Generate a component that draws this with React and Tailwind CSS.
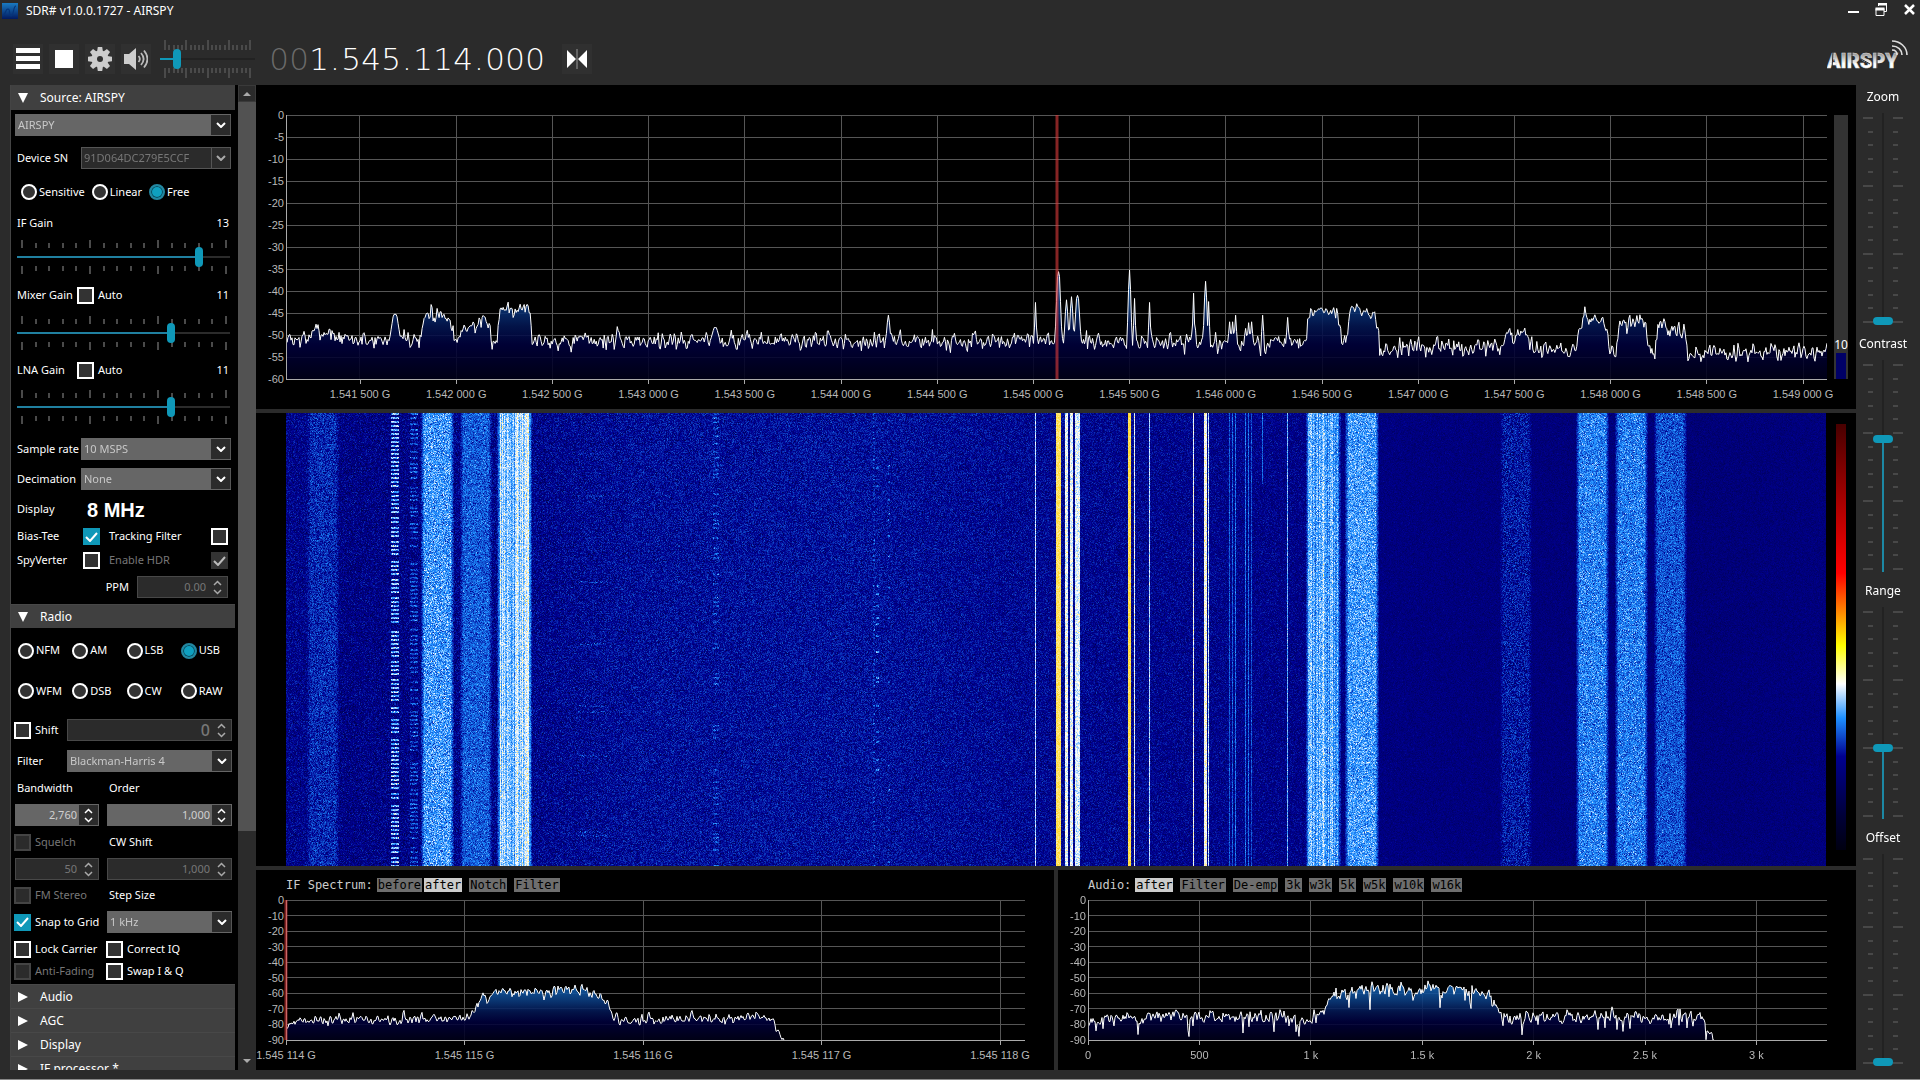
import { useEffect, useRef, useState } from 'react';
import { clsx } from 'clsx';

const START = 286;
const WIDTH = 1540;

// wide signals: from, to, level in dB, waterfall level, waterfall spread
const BANDS = [
  { from: 308, to: 338, db: -49.3, level: 0.33, spread: 0.08 },
  { from: 422, to: 453, db: -45.2, level: 0.57, spread: 0.1 },
  { from: 461, to: 491, db: -47.8, level: 0.44, spread: 0.08 },
  { from: 498, to: 531, db: -43.6, level: 0.68, spread: 0.07, streaks: 0.09 },
  { from: 1307, to: 1340, db: -44.8, level: 0.6, spread: 0.08, streaks: 0.07 },
  { from: 1346, to: 1378, db: -44.8, level: 0.58, spread: 0.09 },
  { from: 1501, to: 1531, db: -50.4, level: 0.29, spread: 0.08 },
  { from: 1577, to: 1608, db: -46.6, level: 0.52, spread: 0.09 },
  { from: 1616, to: 1647, db: -47, level: 0.51, spread: 0.09 },
  { from: 1655, to: 1686, db: -48.6, level: 0.42, spread: 0.08 },
];

// narrow carriers: position, peak in dB, waterfall level, half width
const CARRIERS = [
  { x: 395, db: -45.3, level: 0, w: 4 },
  { x: 715, db: -48.3, level: 0, w: 3 },
  { x: 888, db: -45.5, level: 0, w: 1 },
  { x: 1035, db: -42.6, level: 0.72, w: 0 },
  { x: 1058, db: -35.6, level: 0.95, w: 2 },
  { x: 1066, db: -42, level: 0.78, w: 1 },
  { x: 1071, db: -41.3, level: 0.78, w: 1 },
  { x: 1077, db: -41, level: 0.76, w: 2 },
  { x: 1129, db: -35.2, level: 0.97, w: 1 },
  { x: 1134, db: -41.7, level: 0.78, w: 0 },
  { x: 1149, db: -42.6, level: 0.72, w: 0 },
  { x: 1193, db: -40.5, level: 0.8, w: 0 },
  { x: 1205, db: -37.8, level: 0.82, w: 1 },
  { x: 1208, db: -42.4, level: 0.72, w: 0 },
  { x: 1229, db: -47, level: 0.44, w: 0 },
  { x: 1232, db: -47, level: 0.44, w: 0 },
  { x: 1235, db: -45.5, level: 0.48, w: 0 },
  { x: 1245, db: -48.5, level: 0.48, w: 0 },
  { x: 1248, db: -47.2, level: 0.46, w: 0 },
  { x: 1251, db: -47, level: 0.42, w: 0 },
  { x: 1262, db: -45.5, level: 0.48, w: 0, until: 70 },
  { x: 1287, db: -46, level: 0.62, w: 0 },
];

const RAMP = [
  [0, 0, 0, 40],
  [0.25, 0, 0, 145],
  [0.55, 30, 144, 255],
  [0.8, 255, 255, 255],
  [1, 255, 215, 40],
];

function createRandom(seed) {
  let s = seed;
  return () => {
    s = (s * 1664525 + 1013904223) >>> 0;
    return s / 4294967296;
  };
}

function bell(random) {
  return (random() + random() + random() + random() - 2) * 1.7;
}

function clamp(v, min, max) {
  return Math.min(max, Math.max(min, v));
}

function follow(points, x) {
  for (let i = 1; i < points.length; i++) {
    const [x1, y1] = points[i];
    const [x0, y0] = points[i - 1];
    if (x <= x1) return y0 + ((y1 - y0) * (x - x0)) / (x1 - x0);
  }
  return points[points.length - 1][1];
}

function makeBandTrace() {
  const random = createRandom(7);
  const floor = [[286, -51], [900, -51.3], [1300, -51.9], [1390, -53.3], [1460, -52.8], [1550, -53.2], [1700, -54.4], [1826, -53.7]];
  const out = [];
  let last = 0;
  for (let i = 0; i <= WIDTH; i++) {
    const x = START + i;
    let db = follow(floor, x);
    BANDS.forEach(b => {
      const soft = b.level < 0.35 ? 10 : 5;
      const inside = clamp(Math.min(x - b.from + 1, b.to + 1 - x) / soft, 0, 1);
      db = db + (b.db - db) * Math.sqrt(inside);
    });
    const n = bell(random);
    db += (n + last * 0.4) * 0.95;
    last = n;
    CARRIERS.forEach(c => {
      const away = Math.max(0, Math.abs(x - c.x) - c.w * 0.4);
      const reach = c.w * 0.6 + 1.5;
      if (away < reach) db = Math.max(db, c.db - ((c.db + 51) * away) / reach);
    });
    out.push([i / WIDTH, db]);
  }
  return out;
}

function makeTrace(seed, shape, spread, dips, end) {
  const random = createRandom(seed);
  const out = [];
  let last = 0;
  for (let x = 0; x <= end; x++) {
    const n = bell(random);
    let db = follow(shape, x) + (n + last * 0.5) * spread;
    if (random() < dips) db -= 4 + random() * 6;
    last = n;
    out.push([x / 739, Math.max(-90, db)]);
  }
  return out;
}

const BAND_TRACE = makeBandTrace();
const IF_TRACE = makeTrace(
  21,
  [[0, -81], [12, -77], [100, -77], [184, -75.5], [196, -62], [215, -59.5], [260, -59], [290, -58], [308, -60], [318, -64], [328, -75], [334, -77], [400, -76.5], [480, -75], [489, -80], [496, -90]],
  1.5, 0, 498
);
const AUDIO_TRACE = makeTrace(
  33,
  [[0, -81], [8, -76], [120, -75], [224, -76], [232, -72], [246, -60], [280, -58.5], [330, -57], [388, -58], [400, -62], [414, -76], [500, -75.5], [610, -75], [617, -80], [626, -90]],
  2, 0.045, 626
);

const MAIN_X = Array.from({ length: 16 }, (_, i) => {
  const s = String(1541500 + i * 500);
  return [(74 + i * 96.2) / 1541, `${s[0]}.${s.slice(1, 4)} ${s.slice(4)} G`];
});
const MAIN_Y = Array.from({ length: 13 }, (_, i) => -i * 5);
const SMALL_Y = Array.from({ length: 10 }, (_, i) => -i * 10);
const IF_X = [0, 1, 2, 3, 4].map(i => [(i * 178.5) / 739, `1.545 ${114 + i} G`]);
const AUDIO_X = ['0', '500', '1 k', '1.5 k', '2 k', '2.5 k', '3 k'].map((t, i) => [(i * 111.4) / 739, t]);

function Spectrum({ id, trace, xTicks, yTicks, marker, markerWidth }) {
  const lowest = yTicks[yTicks.length - 1];
  const line = trace.map(([x, db]) => `${(x * 1000).toFixed(2)},${((db / lowest) * 1000).toFixed(1)}`).join(' ');
  const endX = trace[trace.length - 1][0] * 1000;

  return (
    <svg className="block w-full h-full overflow-visible font-['Liberation_Sans',sans-serif] text-[11px]" role="img" aria-label={id}>
      <defs>
        <linearGradient id={`${id}-fill`} gradientUnits="userSpaceOnUse" x1="0" y1="0" x2="0" y2="1000">
          <stop offset="0.6" stopColor="#156bbd" />
          <stop offset="0.72" stopColor="#0b3c80" />
          <stop offset="0.8" stopColor="#031652" />
          <stop offset="0.87" stopColor="#00003c" />
          <stop offset="1" stopColor="#000018" />
        </linearGradient>
      </defs>
      <g stroke="#565656" shapeRendering="crispEdges">
        {yTicks.map(db => {
          const y = `${(db / lowest) * 100}%`;
          return <line key={db} x1="0" x2="100%" y1={y} y2={y} />;
        })}
        {xTicks.map(([x]) => (
          <line key={x} x1={`${x * 100}%`} x2={`${x * 100}%`} y1="0" y2="100%" />
        ))}
      </g>
      <svg width="100%" height="100%" viewBox="0 0 1000 1000" preserveAspectRatio="none">
        <polygon points={`0,1000 ${line} ${endX},1000`} fill={`url(#${id}-fill)`} fillOpacity="0.88" />
        <polyline points={line} fill="none" stroke="#fff" strokeWidth="1" vectorEffect="non-scaling-stroke" />
      </svg>
      <g stroke="#aaa" shapeRendering="crispEdges">
        <line x1="0" x2="0" y1="0" y2="100%" />
        <line x1="0" x2="100%" y1="100%" y2="100%" />
      </g>
      <g fill="#b8b8b8">
        {yTicks.map(db => (
          <text key={db} x="-2" y={`${(db / lowest) * 100}%`} dy="4" textAnchor="end">{db === 0 ? 0 : db}</text>
        ))}
        {xTicks.map(([x, label]) => (
          <svg key={label} x={`${x * 100}%`} y="100%" className="overflow-visible">
            <line x1="0" x2="0" y1="0" y2="5" stroke="#aaa" shapeRendering="crispEdges" />
            <text x="0" y="19" textAnchor="middle">{label}</text>
          </svg>
        ))}
      </g>
      {marker !== undefined && (
        <line x1={`${marker * 100}%`} x2={`${marker * 100}%`} y1="0" y2="100%" stroke="#e03c3c" strokeOpacity="0.6" strokeWidth={markerWidth} />
      )}
    </svg>
  );
}

function Waterfall() {
  const ref = useRef(null);

  useEffect(() => {
    const canvas = ref.current;
    const ctx = canvas.getContext('2d');
    const { width, height } = canvas;
    const image = ctx.createImageData(width, height);
    const random = createRandom(99);
    const floor = [[286, 0.24], [345, 0.22], [540, 0.24], [640, 0.27], [860, 0.275], [1000, 0.255], [1300, 0.23], [1390, 0.205], [1560, 0.195], [1700, 0.185], [1826, 0.2]];
    const floorSpread = [[286, 0.055], [600, 0.065], [860, 0.065], [1300, 0.045], [1390, 0.025], [1826, 0.022]];

    const columns = Array.from({ length: width }, (_, i) => {
      const x = START + i;
      let level = follow(floor, x);
      let spread = follow(floorSpread, x);
      BANDS.forEach(b => {
        const inside = clamp(Math.min(x - b.from + 2, b.to + 1 - x) / 4, 0, 1);
        const streak = b.streaks ? bell(random) * b.streaks : 0;
        level += (b.level + streak - level) * inside;
        spread += (b.spread - spread) * inside;
      });
      const carrier = CARRIERS.find(c => c.level > 0 && Math.abs(x - c.x) <= c.w);
      return { x, level, spread, carrier };
    });

    // bursts that blink on and off down the waterfall
    const bursts = [
      { from: 391, to: 398, level: 0.64, on: 0.8 },
      { from: 410, to: 417, level: 0.4, on: 0.6 },
      { from: 578, to: 606, level: 0.31, on: 0.08 },
      { from: 713, to: 718, level: 0.4, on: 0.25 },
      { from: 873, to: 874, level: 0.38, on: 0.6 },
      { from: 876, to: 878, level: 0.5, on: 0.1 },
      { from: 888, to: 889, level: 0.45, on: 0.1 },
    ];

    for (let y = 0; y < height; y++) {
      if (y % 2 === 0) bursts.forEach(b => { b.lit = !b.lit && random() < b.on; });
      columns.forEach(({ x, level, spread, carrier }, i) => {
        let v = level;
        let s = spread;
        if (carrier && !(carrier.until && y > carrier.until)) {
          v = carrier.level;
          s = carrier.level > 0.9 ? 0.03 : 0.06;
        }
        const burst = bursts.find(b => b.lit && x >= b.from && x <= b.to);
        if (burst) {
          v = burst.level;
          s = 0.1;
        }
        v = clamp(v + bell(random) * s, 0, 1);
        let k = 1;
        while (k < RAMP.length - 1 && v > RAMP[k][0]) k++;
        const a = RAMP[k - 1];
        const b = RAMP[k];
        const t = (v - a[0]) / (b[0] - a[0]);
        const p = (y * width + i) * 4;
        image.data[p] = a[1] + (b[1] - a[1]) * t;
        image.data[p + 1] = a[2] + (b[2] - a[2]) * t;
        image.data[p + 2] = a[3] + (b[3] - a[3]) * t;
        image.data[p + 3] = 255;
      });
    }
    ctx.putImageData(image, 0, 0);
  }, []);

  return <canvas ref={ref} width={WIDTH} height={453} className="flex-1 min-w-0 h-full" />;
}

function Section({ title, open, first }) {
  return (
    <button
      className={clsx(
        'flex w-full shrink-0 items-center bg-[#404040] pl-[7px] text-left text-[12px] leading-4',
        first ? 'h-[25px]' : 'h-6 border-t border-[#484848]'
      )}
    >
      <svg className="w-[10px] h-[10px] mr-3 fill-white" viewBox="0 0 10 10">
        {open ? <path d="M0 0h10L5 10z" /> : <path d="M0 0l10 5L0 10z" />}
      </svg>
      {title}
    </button>
  );
}

function Select({ label, value, disabled, className }) {
  return (
    <div className={clsx('relative h-[22px] min-w-0', className)}>
      <select
        aria-label={label}
        disabled={disabled}
        className={clsx(
          'h-full w-full appearance-none border pl-[2px] pr-6 text-[11px] opacity-100',
          disabled ? 'border-[#555] bg-[#2b2b2b] text-[#777]' : 'border-[#666] bg-[#666] text-[#c8c8c8]'
        )}
      >
        <option>{value}</option>
      </select>
      <span
        className={clsx(
          'pointer-events-none absolute right-0 top-px flex h-5 w-5 items-center justify-center bg-[#2b2b2b]',
          disabled ? 'border-x border-[#555] text-[#aaa]' : 'border-r border-[#555] text-white'
        )}
      >
        <svg className="w-[10px] h-[6px] fill-none stroke-current stroke-2" viewBox="0 0 10 6">
          <path d="M1 1l4 4 4-4" />
        </svg>
      </span>
    </div>
  );
}

function Stepper({ label, value, disabled, big, className }) {
  return (
    <div
      className={clsx(
        'flex h-[22px] min-w-0 border',
        disabled ? 'border-[#484848] bg-[#2b2b2b] text-[#777]' : 'border-[#666] bg-[#666] text-[#d0d0d0]',
        className
      )}
    >
      <input
        aria-label={label}
        defaultValue={value}
        disabled={disabled}
        className={clsx('min-w-0 flex-1 bg-transparent pr-[2px] text-right', big ? 'text-[16px] font-medium' : 'text-[11px]')}
      />
      <div className={clsx('flex w-[19px] flex-col items-center justify-center gap-[3px] bg-[#2b2b2b]', disabled ? 'text-[#aaa]' : 'text-white')}>
        <button aria-label={`${label} up`} disabled={disabled}>
          <svg className="block w-[9px] h-[6px] fill-none stroke-current stroke-[1.5]" viewBox="0 0 9 6"><path d="M1 5l3.500-3.500L8 5" /></svg>
        </button>
        <button aria-label={`${label} down`} disabled={disabled}>
          <svg className="block w-[9px] h-[6px] fill-none stroke-current stroke-[1.5]" viewBox="0 0 9 6"><path d="M1 1l3.500 3.500L8 1" /></svg>
        </button>
      </div>
    </div>
  );
}

function Check({ label, checked, disabled, reverse, className }) {
  return (
    <label className={clsx('flex items-center gap-1 whitespace-nowrap', disabled && 'text-[#777]', reverse && 'flex-row-reverse justify-between', className)}>
      <span className="grid size-[17px] shrink-0 place-items-center">
        <input
          type="checkbox"
          defaultChecked={checked}
          disabled={disabled}
          className="peer [grid-area:1/1] size-[17px] appearance-none border-2 border-white bg-[#333] checked:border-[#0f98b8] checked:bg-[#0f98b8] disabled:border-[#444] disabled:bg-[#2b2b2b] disabled:checked:border-[#333] disabled:checked:bg-[#333]"
        />
        <svg className="pointer-events-none hidden [grid-area:1/1] w-[13px] h-[10px] fill-none stroke-white stroke-2 peer-checked:block peer-disabled:stroke-[#bbb]" viewBox="0 0 13 10">
          <path d="M1 5l4 4 7-8" />
        </svg>
      </span>
      {label}
    </label>
  );
}

function Radio({ label, name, checked }) {
  return (
    <label className="flex items-center gap-[2px] whitespace-nowrap">
      <input
        type="radio"
        name={name}
        defaultChecked={checked}
        className="size-4 shrink-0 appearance-none rounded-full border-2 border-white bg-[#333] checked:border-[#2487a0] checked:bg-[#0fa0c0] checked:shadow-[inset_0_0_0_1px_#0a4a5c]"
      />
      {label}
    </label>
  );
}

function Ticks({ count, tall, short, align }) {
  return (
    <div className={clsx('flex justify-between', align)}>
      {Array.from({ length: count }, (_, i) => (
        <span key={i} className={clsx('w-[2px] bg-[#4a4a4a]', i % 5 === 0 ? tall : short)} />
      ))}
    </div>
  );
}

function GainSlider({ label, initial }) {
  const [value, setValue] = useState(initial);
  const filled = (value / 15) * 100;
  return (
    <div className="flex h-[38px] shrink-0 flex-col justify-center pl-[6px] pr-[5px]">
      <Ticks count={16} tall="h-2" short="h-[5px]" align="items-end pl-1 pr-[3px] h-[8px]" />
      <input
        type="range"
        aria-label={label}
        min="0"
        max="15"
        value={value}
        onChange={e => setValue(Number(e.target.value))}
        style={{ backgroundImage: `linear-gradient(to right, #2080a0 ${filled}%, #2b2b2b ${filled}%)` }}
        className="relative -my-px h-5 w-full appearance-none bg-[length:100%_2px] bg-center bg-no-repeat [&::-webkit-slider-thumb]:h-5 [&::-webkit-slider-thumb]:w-2 [&::-webkit-slider-thumb]:appearance-none [&::-webkit-slider-thumb]:rounded [&::-webkit-slider-thumb]:bg-[#0f98b8]"
      />
      <Ticks count={16} tall="h-2" short="h-[5px]" align="items-start pl-1 pr-[3px] h-[8px]" />
    </div>
  );
}

function VerticalSlider({ label, initial }) {
  const [value, setValue] = useState(initial);
  const marks = Array.from({ length: 16 }, (_, i) => i);
  return (
    <div className="flex min-h-0 flex-1 flex-col items-center">
      <label htmlFor={label} className="flex h-6 items-center text-[12px]">{label}</label>
      <div className="flex min-h-0 flex-1 pt-[5px] pb-[6px]">
        <div className="flex w-[10px] flex-col items-end justify-between py-[3px]">
          {marks.map(i => <span key={i} className={clsx('h-[2px] bg-[#484848]', i % 5 === 0 ? 'w-[10px]' : 'w-[5px]')} />)}
        </div>
        <input
          id={label}
          type="range"
          value={value}
          onChange={e => setValue(Number(e.target.value))}
          style={{ backgroundImage: `linear-gradient(to top, #1c88a4 ${value}%, #222 ${value}%)` }}
          className="-mx-px h-full w-5 appearance-none bg-[length:2px_100%] bg-center bg-no-repeat [direction:rtl] [writing-mode:vertical-lr] [&::-webkit-slider-thumb]:h-2 [&::-webkit-slider-thumb]:w-5 [&::-webkit-slider-thumb]:appearance-none [&::-webkit-slider-thumb]:rounded [&::-webkit-slider-thumb]:bg-[#0f98b8]"
        />
        <div className="flex w-[10px] flex-col items-start justify-between py-[3px]">
          {marks.map(i => <span key={i} className={clsx('h-[2px] bg-[#484848]', i % 5 === 0 ? 'w-[10px]' : 'w-[5px]')} />)}
        </div>
      </div>
    </div>
  );
}

function TitleBar() {
  return (
    <header className="flex h-[22px] shrink-0 items-center pl-[2px] pr-[5px] text-[12px]">
      <svg className="size-4 mr-2" viewBox="0 0 16 16">
        <defs>
          <linearGradient id="app-icon" x1="0" y1="0" x2="0" y2="1">
            <stop offset="0" stopColor="#1a7ac0" />
            <stop offset="1" stopColor="#021a60" />
          </linearGradient>
        </defs>
        <path d="M0 0h16v16H0z" fill="url(#app-icon)" />
        <path d="M1 12c3 0 2-6 5-6s0 7 3 7 2-10 5-10" fill="none" stroke="#06357a" strokeWidth="1.200" />
      </svg>
      <h1>SDR# v1.0.0.1727 - AIRSPY</h1>
      <div className="ml-auto flex items-center gap-4 text-white">
        <button aria-label="Minimize">
          <svg className="w-[11px] h-4" viewBox="0 0 11 16"><path d="M0 8h11v2H0z" fill="currentColor" /></svg>
        </button>
        <button aria-label="Restore">
          <svg className="w-[13px] h-4 fill-none stroke-current" viewBox="0 0 13 16">
            <path d="M3.500 3V.500h8v8H9" /><path d="M3 1h9" strokeWidth="3" />
            <path d="M1 5.500h8v7H1z" /><path d="M.5 6h9" strokeWidth="3" />
          </svg>
        </button>
        <button aria-label="Close">
          <svg className="w-[11px] h-4 fill-none stroke-current stroke-[2.500]" viewBox="0 0 11 16"><path d="M1 2l9 9M10 2l-9 9" /></svg>
        </button>
      </div>
    </header>
  );
}

function ToolButton({ label, children }) {
  return (
    <button aria-label={label} className="flex size-[30px] items-center justify-center bg-[#303030]">
      {children}
    </button>
  );
}

function Toolbar() {
  const [volume, setVolume] = useState(15);
  return (
    <div className="flex h-[63px] shrink-0 items-center pl-[13px] pr-3 pt-[11px]">
      <div className="flex gap-[6px]">
        <ToolButton label="Menu">
          <svg className="w-6 h-[22px] fill-white" viewBox="0 0 24 22"><path d="M0 0h24v5H0zM0 8h24v5H0zM0 16h24v5H0z" /></svg>
        </ToolButton>
        <ToolButton label="Stop">
          <svg className="size-[18px] fill-white" viewBox="0 0 18 18"><path d="M0 0h18v18H0z" /></svg>
        </ToolButton>
        <ToolButton label="Settings">
          <svg className="size-6" viewBox="-12 -12 24 24">
            <g fill="#ccc">
              {[0, 45, 90, 135, 180, 225, 270, 315].map(a => (
                <path key={a} d="M-3-7L-2.200-12h4.400L3-7z" transform={`rotate(${a})`} />
              ))}
              <circle r="8.500" />
            </g>
            <circle r="3" fill="#303030" />
          </svg>
        </ToolButton>
        <ToolButton label="Mute">
          <svg className="w-6 h-[22px]" viewBox="0 0 24 22">
            <path d="M0 6h5l7-6v22l-7-6H0z" fill="#ccc" />
            <g fill="none" stroke="#bbb" strokeWidth="1.800">
              <path d="M14.500 8c1.800 2 1.800 4 0 6M17 5c3.500 4 3.500 8 0 12M20 2.500c4.500 5.500 4.500 11.500 0 17" />
            </g>
          </svg>
        </ToolButton>
      </div>

      <div className="ml-[9px] flex w-[95px] flex-col">
        <Ticks count={21} tall="h-[10px]" short="h-[5px]" align="items-end h-[10px] px-1" />
        <input
          type="range"
          aria-label="Volume"
          value={volume}
          onChange={e => setVolume(Number(e.target.value))}
          style={{ backgroundImage: `linear-gradient(to right, #0f98b8 ${volume}%, #222 ${volume}%)` }}
          className="relative -my-px h-5 w-full appearance-none bg-[length:100%_2px] bg-center bg-no-repeat [&::-webkit-slider-thumb]:h-5 [&::-webkit-slider-thumb]:w-2 [&::-webkit-slider-thumb]:appearance-none [&::-webkit-slider-thumb]:rounded [&::-webkit-slider-thumb]:bg-[#0f98b8]"
        />
        <Ticks count={21} tall="h-[10px]" short="h-[5px]" align="items-start h-[10px] px-1" />
      </div>

      <div className="ml-[14px] flex font-['DejaVu_Sans',sans-serif] text-[31px] font-extralight leading-8">
        {'001.545.114.000'.split('').map((c, i) => (
          <span key={i} className={clsx('text-center', c === '.' ? 'w-3' : 'w-5', i < 2 && 'text-[#6a6a6a]')}>{c}</span>
        ))}
      </div>

      <div className="ml-[17px]">
        <ToolButton label="Center tuning">
          <svg className="w-5 h-5" viewBox="0 0 20 20">
            <path d="M0 1l9 9-9 9zM20 1l-9 9 9 9z" fill="#fff" />
            <path d="M10 0v20" stroke="#999" />
          </svg>
        </ToolButton>
      </div>

      <svg className="mb-[11px] ml-auto w-[81px] h-[32px]" viewBox="0 0 81 32" role="img" aria-label="Airspy">
        <defs>
          <linearGradient id="logo" x1="0" y1="0" x2="0" y2="1">
            <stop offset="0.200" stopColor="#999" />
            <stop offset="0.600" stopColor="#fff" />
          </linearGradient>
        </defs>
        <text x="0" y="30" fill="url(#logo)" stroke="#ddd" strokeWidth="0.500" className="font-['Roboto',sans-serif] text-[20px] font-black">AIRSPY</text>
        <g stroke="#2b2b2b" strokeWidth="1">
          <path d="M6 14l-1 17M25 14v17M34 21l9 5M50 14v17M61 24v7" />
        </g>
        <g fill="none" stroke="#ddd" strokeWidth="1.600">
          <path d="M65 3c8 0 15 6 15 14M65 8c6 0 10 4 10 9M65 12c3 0 5 2 5 5" />
        </g>
      </svg>
    </div>
  );
}

function Sidebar() {
  return (
    <aside className="mb-[3px] ml-[10px] flex w-[246px] shrink-0 border-l border-[#444] bg-black text-[11px] text-white">
      <div className="flex min-w-0 flex-1 flex-col overflow-hidden">
        <Section title="Source: AIRSPY" open first />
        <div className="flex h-[30px] shrink-0 items-center pl-1 pr-1">
          <Select label="Source" value="AIRSPY" className="flex-1" />
        </div>
        <div className="flex h-9 shrink-0 items-center pl-[6px] pr-1">
          <span className="w-16">Device SN</span>
          <Select label="Device SN" value="91D064DC279E5CCF" disabled className="flex-1" />
        </div>
        <div className="flex h-8 shrink-0 items-center gap-[7px] pl-[10px]">
          <Radio name="gain" label="Sensitive" />
          <Radio name="gain" label="Linear" />
          <Radio name="gain" label="Free" checked />
        </div>
        <div className="flex h-[30px] shrink-0 items-center justify-between px-[6px]">
          <span>IF Gain</span>
          <span>13</span>
        </div>
        <GainSlider label="IF Gain" initial={13} />
        <div className="flex h-[38px] shrink-0 items-center px-[6px]">
          <span className="w-[60px]">Mixer Gain</span>
          <Check label="Auto" />
          <span className="ml-auto">11</span>
        </div>
        <GainSlider label="Mixer Gain" initial={11} />
        <div className="flex h-9 shrink-0 items-center px-[6px]">
          <span className="w-[60px]">LNA Gain</span>
          <Check label="Auto" />
          <span className="ml-auto">11</span>
        </div>
        <GainSlider label="LNA Gain" initial={11} />
        <div className="mt-2 flex h-[30px] shrink-0 items-center pl-[6px] pr-1">
          <span className="w-16">Sample rate</span>
          <Select label="Sample rate" value="10 MSPS" className="flex-1" />
        </div>
        <div className="flex h-[30px] shrink-0 items-center pl-[6px] pr-1">
          <span className="w-16">Decimation</span>
          <Select label="Decimation" value="None" className="flex-1" />
        </div>
        <div className="flex h-[31px] shrink-0 items-center pl-[6px]">
          <span className="w-[70px]">Display</span>
          <span className="font-['Liberation_Sans',sans-serif] text-[20px] font-bold">8 MHz</span>
        </div>
        <div className="flex h-[23px] shrink-0 items-center pl-[6px] pr-[7px]">
          <Check label="Bias-Tee" checked reverse className="w-[83px]" />
          <Check label="Tracking Filter" reverse className="ml-[9px] flex-1" />
        </div>
        <div className="flex h-[25px] shrink-0 items-center pl-[6px] pr-[7px]">
          <Check label="SpyVerter" reverse className="w-[83px]" />
          <Check label="Enable HDR" checked disabled reverse className="ml-[9px] flex-1" />
        </div>
        <div className="flex h-7 shrink-0 items-center justify-end gap-2 pr-[7px]">
          <span>PPM</span>
          <Stepper label="PPM" value="0.00" disabled className="w-[91px]" />
        </div>

        <div className="mt-[3px] flex shrink-0">
          <Section title="Radio" open />
        </div>
        <div className="grid h-[45px] shrink-0 grid-cols-4 items-center pl-[7px]">
          <Radio name="mode" label="NFM" />
          <Radio name="mode" label="AM" />
          <Radio name="mode" label="LSB" />
          <Radio name="mode" label="USB" checked />
        </div>
        <div className="grid h-9 shrink-0 grid-cols-4 items-center pl-[7px]">
          <Radio name="mode" label="WFM" />
          <Radio name="mode" label="DSB" />
          <Radio name="mode" label="CW" />
          <Radio name="mode" label="RAW" />
        </div>
        <div className="mt-[6px] flex h-[30px] shrink-0 items-center pl-[3px] pr-[3px]">
          <Check label="Shift" className="w-[53px]" />
          <Stepper label="Shift" value="0" disabled big className="flex-1" />
        </div>
        <div className="flex h-8 shrink-0 items-center pl-[6px] pr-[3px]">
          <span className="w-[50px]">Filter</span>
          <Select label="Filter" value="Blackman-Harris 4" className="flex-1" />
        </div>
        <div className="flex h-[22px] shrink-0 items-center pl-[6px]">
          <span className="w-[92px]">Bandwidth</span>
          <span>Order</span>
        </div>
        <div className="flex h-8 shrink-0 items-center gap-2 pl-1 pr-[3px]">
          <Stepper label="Bandwidth" value="2,760" className="w-[84px]" />
          <Stepper label="Order" value="1,000" className="flex-1" />
        </div>
        <div className="flex h-[22px] shrink-0 items-center pl-[3px]">
          <Check label="Squelch" disabled className="w-[95px]" />
          <span>CW Shift</span>
        </div>
        <div className="flex h-8 shrink-0 items-center gap-2 pl-1 pr-[3px]">
          <Stepper label="Squelch" value="50" disabled className="w-[84px]" />
          <Stepper label="CW Shift" value="1,000" disabled className="flex-1" />
        </div>
        <div className="flex h-5 shrink-0 items-center pl-[3px]">
          <Check label="FM Stereo" disabled className="w-[95px]" />
          <span>Step Size</span>
        </div>
        <div className="flex h-[34px] shrink-0 items-center pl-[3px] pr-[3px]">
          <Check label="Snap to Grid" checked className="w-[93px]" />
          <Select label="Step Size" value="1 kHz" className="flex-1" />
        </div>
        <div className="flex h-5 shrink-0 items-center pl-[3px]">
          <Check label="Lock Carrier" className="w-[92px]" />
          <Check label="Correct IQ" />
        </div>
        <div className="flex h-[25px] shrink-0 items-center pl-[3px]">
          <Check label="Anti-Fading" disabled className="w-[92px]" />
          <Check label="Swap I & Q" />
        </div>
        <Section title="Audio" />
        <Section title="AGC" />
        <Section title="Display" />
        <Section title="IF processor *" />
      </div>

      <div className="ml-[3px] flex w-[18px] flex-col bg-[#2b2b2b]">
        <button aria-label="Scroll up" className="flex h-[17px] items-center justify-center border border-[#3a3a3a]">
          <svg className="w-2 h-1 fill-[#aaa]" viewBox="0 0 8 4"><path d="M0 4l4-4 4 4z" /></svg>
        </button>
        <div className="h-[74%] bg-[#525252]" />
        <button aria-label="Scroll down" className="mt-auto flex h-[18px] items-center justify-center">
          <svg className="w-2 h-1 fill-[#aaa]" viewBox="0 0 8 4"><path d="M0 0l4 4 4-4z" /></svg>
        </button>
      </div>
    </aside>
  );
}

function SmallPanel({ title, buttons, ...chart }) {
  return (
    <section className="flex min-h-0 min-w-0 flex-col bg-black pb-[30px] pl-[30px] pr-[29px] pt-2">
      <div className="mb-2 flex h-[14px] shrink-0 items-center whitespace-nowrap font-['DejaVu_Sans_Mono',monospace] text-[12px]">
        <h2 className="mr-1 text-[#ccc]">{title}</h2>
        {buttons.map(([text, on, tight]) => (
          <button
            key={text}
            className={clsx('h-[14px] px-px leading-[14px] text-black', on ? 'bg-[#ccc]' : 'bg-[#6e6e6e]', tight ? 'mr-[2px]' : 'mr-[7px]')}
          >
            {text}
          </button>
        ))}
      </div>
      <div className="min-h-0 flex-1">
        <Spectrum yTicks={SMALL_Y} {...chart} />
      </div>
    </section>
  );
}

export default function App() {
  return (
    <div className="flex h-screen flex-col overflow-hidden bg-[#2b2b2b] font-['Noto_Sans',sans-serif] text-white">
      <TitleBar />
      <Toolbar />
      <div className="flex min-h-0 flex-1">
        <Sidebar />
        <main className="mb-[3px] grid min-w-0 flex-1 grid-rows-[324fr_453fr_200fr] gap-1">
          <section className="flex min-h-0 bg-black py-[30px] pl-[30px] pr-2">
            <div className="min-w-0 flex-1">
              <Spectrum id="band" trace={BAND_TRACE} xTicks={MAIN_X} yTicks={MAIN_Y} marker={771 / 1541} markerWidth={3} />
            </div>
            <div className="ml-[7px] flex w-[14px] flex-col items-center justify-end bg-[#333] text-[12px] leading-4">
              <span>10</span>
              <div className="h-[10%] w-[10px] bg-[#000066]" />
            </div>
          </section>
          <section className="flex min-h-0 bg-black pl-[30px] pr-[10px]">
            <Waterfall />
            <div className="mb-4 ml-[10px] mt-[11px] w-[10px] bg-[linear-gradient(to_bottom,#480000_0%,#ff0000_35%,#ffff00_52%,#ffffff_61%,#1e90ff_69%,#000091_78%,#000038_92%,#000010_100%)]" />
          </section>
          <div className="grid min-h-0 grid-cols-2 grid-rows-1 gap-1">
            <SmallPanel
              id="if"
              title="IF Spectrum:"
              buttons={[['before', false, true], ['after', true], ['Notch'], ['Filter']]}
              trace={IF_TRACE}
              xTicks={IF_X}
              marker={0}
              markerWidth={3}
            />
            <SmallPanel
              id="audio"
              title="Audio:"
              buttons={[['after', true], ['Filter'], ['De-emp'], ['3k'], ['w3k'], ['5k'], ['w5k'], ['w10k'], ['w16k']]}
              trace={AUDIO_TRACE}
              xTicks={AUDIO_X}
            />
          </div>
        </main>
        <aside className="flex w-16 shrink-0 flex-col pr-[10px]">
          <VerticalSlider label="Zoom" initial={0} />
          <VerticalSlider label="Contrast" initial={63} />
          <VerticalSlider label="Range" initial={33} />
          <VerticalSlider label="Offset" initial={0} />
        </aside>
      </div>
      <footer className="h-[7px] shrink-0 border-b border-[#888]" />
    </div>
  );
}
